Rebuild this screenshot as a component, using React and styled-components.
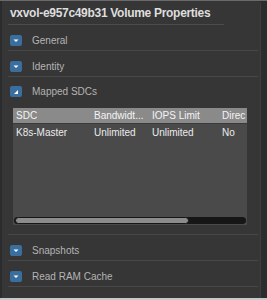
import React from "react";
import styled, { createGlobalStyle } from "styled-components";

const Global = createGlobalStyle`
  html, body {
    margin: 0;
    background: #2b2c2e;
    font-family: "Liberation Sans", Arial, sans-serif;
  }
`;

const sections = [
  { name: "General", open: false },
  { name: "Identity", open: false },
  { name: "Mapped SDCs", open: true },
  { name: "Snapshots", open: false },
  { name: "Read RAM Cache", open: false },
];

const columns = [
  { label: "SDC", width: 78 },
  { label: "Bandwidt...", width: 58 },
  { label: "IOPS Limit", width: 70 },
  { label: "Direc", width: 28 },
];

const rows = [["K8s-Master", "Unlimited", "Unlimited", "No"]];

const Toggle = ({ open }) => (
  <Icon>
    <svg width="12" height="11" viewBox="0 0 12 11">
      <rect width="12" height="11" rx="2" fill="#3a6e9e" />
      {open ? (
        <polygon points="4,8 8,8 8,4" fill="#fff" />
      ) : (
        <polygon points="3.5,4.5 8.5,4.5 6,7" fill="#fff" />
      )}
    </svg>
  </Icon>
);

const SdcTable = () => (
  <TableBox>
    <HeadRow>
      {columns.map((c) => (
        <Cell key={c.label} style={{ width: c.width }}>
          {c.label}
        </Cell>
      ))}
    </HeadRow>
    {rows.map((r) => (
      <BodyRow key={r[0]}>
        {r.map((v, i) => (
          <Cell key={i} style={{ width: columns[i].width }}>
            {v}
          </Cell>
        ))}
      </BodyRow>
    ))}
    <Spacer />
    <ScrollTrack>
      <ScrollThumb />
    </ScrollTrack>
  </TableBox>
);

export default function App() {
  return (
    <>
      <Global />
      <Page>
        <Panel>
          <Title>vxvol-e957c49b31 Volume Properties</Title>
          {sections.map((s) => (
            <Section key={s.name}>
              <Header open={s.open}>
                <Toggle open={s.open} />
                <Label>{s.name}</Label>
              </Header>
              {s.open && <SdcTable />}
            </Section>
          ))}
        </Panel>
        <Bottom />
      </Page>
    </>
  );
}

const Page = styled.div`
  width: 267px;
  height: 300px;
  border-top: 1px solid #6a6a6a;
  box-sizing: border-box;
  display: flex;
  flex-direction: column;
`;

const Panel = styled.div`
  margin-left: 2px;
  width: 259px;
  flex: 1;
  background: #363636;
  border-right: 1px solid #3e3e3e;
  border-top-right-radius: 4px;
  padding: 0 2px 0 6px;
  box-sizing: border-box;
`;

const Bottom = styled.div`
  height: 2px;
  background: #c8c8c8;
`;

const Title = styled.div`
  color: #dedede;
  font-size: 12px;
  font-weight: bold;
  letter-spacing: -0.3px;
  height: 23px;
  line-height: 24px;
  padding-left: 2px;
  margin-right: 34px;
  border-bottom: 1px solid #4c4c4c;
`;

const Section = styled.div`
  border-bottom: 1px solid #484848;
`;

const Header = styled.div`
  display: flex;
  align-items: center;
  box-sizing: border-box;
  height: 25px;
  padding: ${(p) => (p.open ? "4px" : "5px")} 0 0 2px;
`;

const Icon = styled.span`
  display: flex;
  width: 12px;
  height: 11px;
`;

const Label = styled.span`
  margin-left: 10px;
  color: #b4b4b4;
  font-size: 10px;
`;

const TableBox = styled.div`
  margin: 6px 11px 9px 5px;
  height: 117px;
  background: #4a4a4a;
  display: flex;
  flex-direction: column;
  overflow: hidden;
`;

const HeadRow = styled.div`
  display: flex;
  height: 15px;
  background: #8a8a8a;
  border-bottom: 1px solid #3a3a3a;
  color: #f4f4f4;
`;

const BodyRow = styled.div`
  display: flex;
  height: 16px;
  margin-top: 1px;
  color: #ececec;
`;

const Cell = styled.div`
  flex: none;
  box-sizing: border-box;
  font-size: 10px;
  line-height: 15px;
  padding-left: 3px;
  white-space: nowrap;
  overflow: hidden;
`;

const Spacer = styled.div`
  flex: 1;
`;

const ScrollTrack = styled.div`
  height: 7px;
  margin: 0 1px 1px 1px;
  background: #161616;
  border-radius: 4px;
  display: flex;
`;

const ScrollThumb = styled.div`
  width: 172px;
  margin-left: 1px;
  background: #8c8c8c;
  border: 1px solid #161616;
  border-radius: 4px;
`;
